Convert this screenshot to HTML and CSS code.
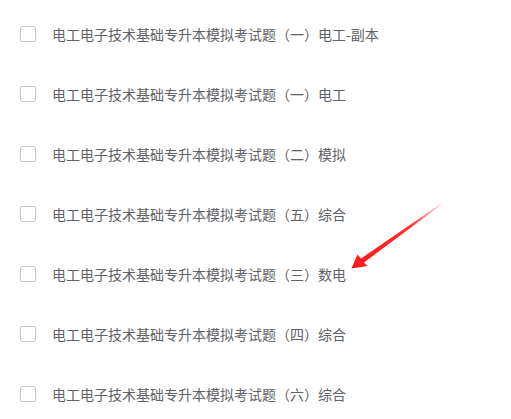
FILE: index.html
```html
<!DOCTYPE html>
<html lang="zh">
<head>
<meta charset="utf-8">
<link rel="stylesheet" href="styles.css">
</head>
<body>
<ul class="list">
  <li class="row"><span class="box"></span><span class="label">电工电子技术基础专升本模拟考试题（一）电工-副本</span></li>
  <li class="row"><span class="box"></span><span class="label">电工电子技术基础专升本模拟考试题（一）电工</span></li>
  <li class="row"><span class="box"></span><span class="label">电工电子技术基础专升本模拟考试题（二）模拟</span></li>
  <li class="row"><span class="box"></span><span class="label">电工电子技术基础专升本模拟考试题（五）综合</span></li>
  <li class="row"><span class="box"></span><span class="label">电工电子技术基础专升本模拟考试题（三）数电</span></li>
  <li class="row"><span class="box"></span><span class="label">电工电子技术基础专升本模拟考试题（四）综合</span></li>
  <li class="row"><span class="box"></span><span class="label">电工电子技术基础专升本模拟考试题（六）综合</span></li>
</ul>
<svg class="arrow" width="511" height="419" viewBox="0 0 511 419">
  <defs>
    <linearGradient id="g" x1="442" y1="203" x2="352" y2="268" gradientUnits="userSpaceOnUse">
      <stop offset="0" stop-color="#ff2020" stop-opacity="0.1"/>
      <stop offset="0.35" stop-color="#ff2020" stop-opacity="0.95"/>
      <stop offset="1" stop-color="#ff1a1a"/>
    </linearGradient>
  </defs>
  <path d="M441.5 203.2 L361 258.5 L357.5 254.5 L351.5 268.5 L367.5 266 L364 262.5 L442 204.2 Z" fill="url(#g)"/>
</svg>
</body>
</html>
```
FILE: styles.css
```css
html, body {
  margin: 0;
  padding: 0;
  background: #ffffff;
}
body {
  width: 511px;
  height: 419px;
  overflow: hidden;
  position: relative;
  font-family: "Noto Sans CJK SC", "Noto Sans", sans-serif;
}
.list {
  list-style: none;
  margin: 0;
  padding: 4px 0 0 20px;
}
.row {
  height: 60px;
  display: flex;
  align-items: center;
}
.box {
  width: 14px;
  height: 14px;
  border: 1px solid #c4cad4;
  border-radius: 2px;
  box-sizing: content-box;
  flex: none;
}
.label {
  margin-left: 16px;
  font-size: 14px;
  color: #606266;
  line-height: 20px;
}
.arrow {
  position: absolute;
  left: 0;
  top: 0;
  pointer-events: none;
}
```
